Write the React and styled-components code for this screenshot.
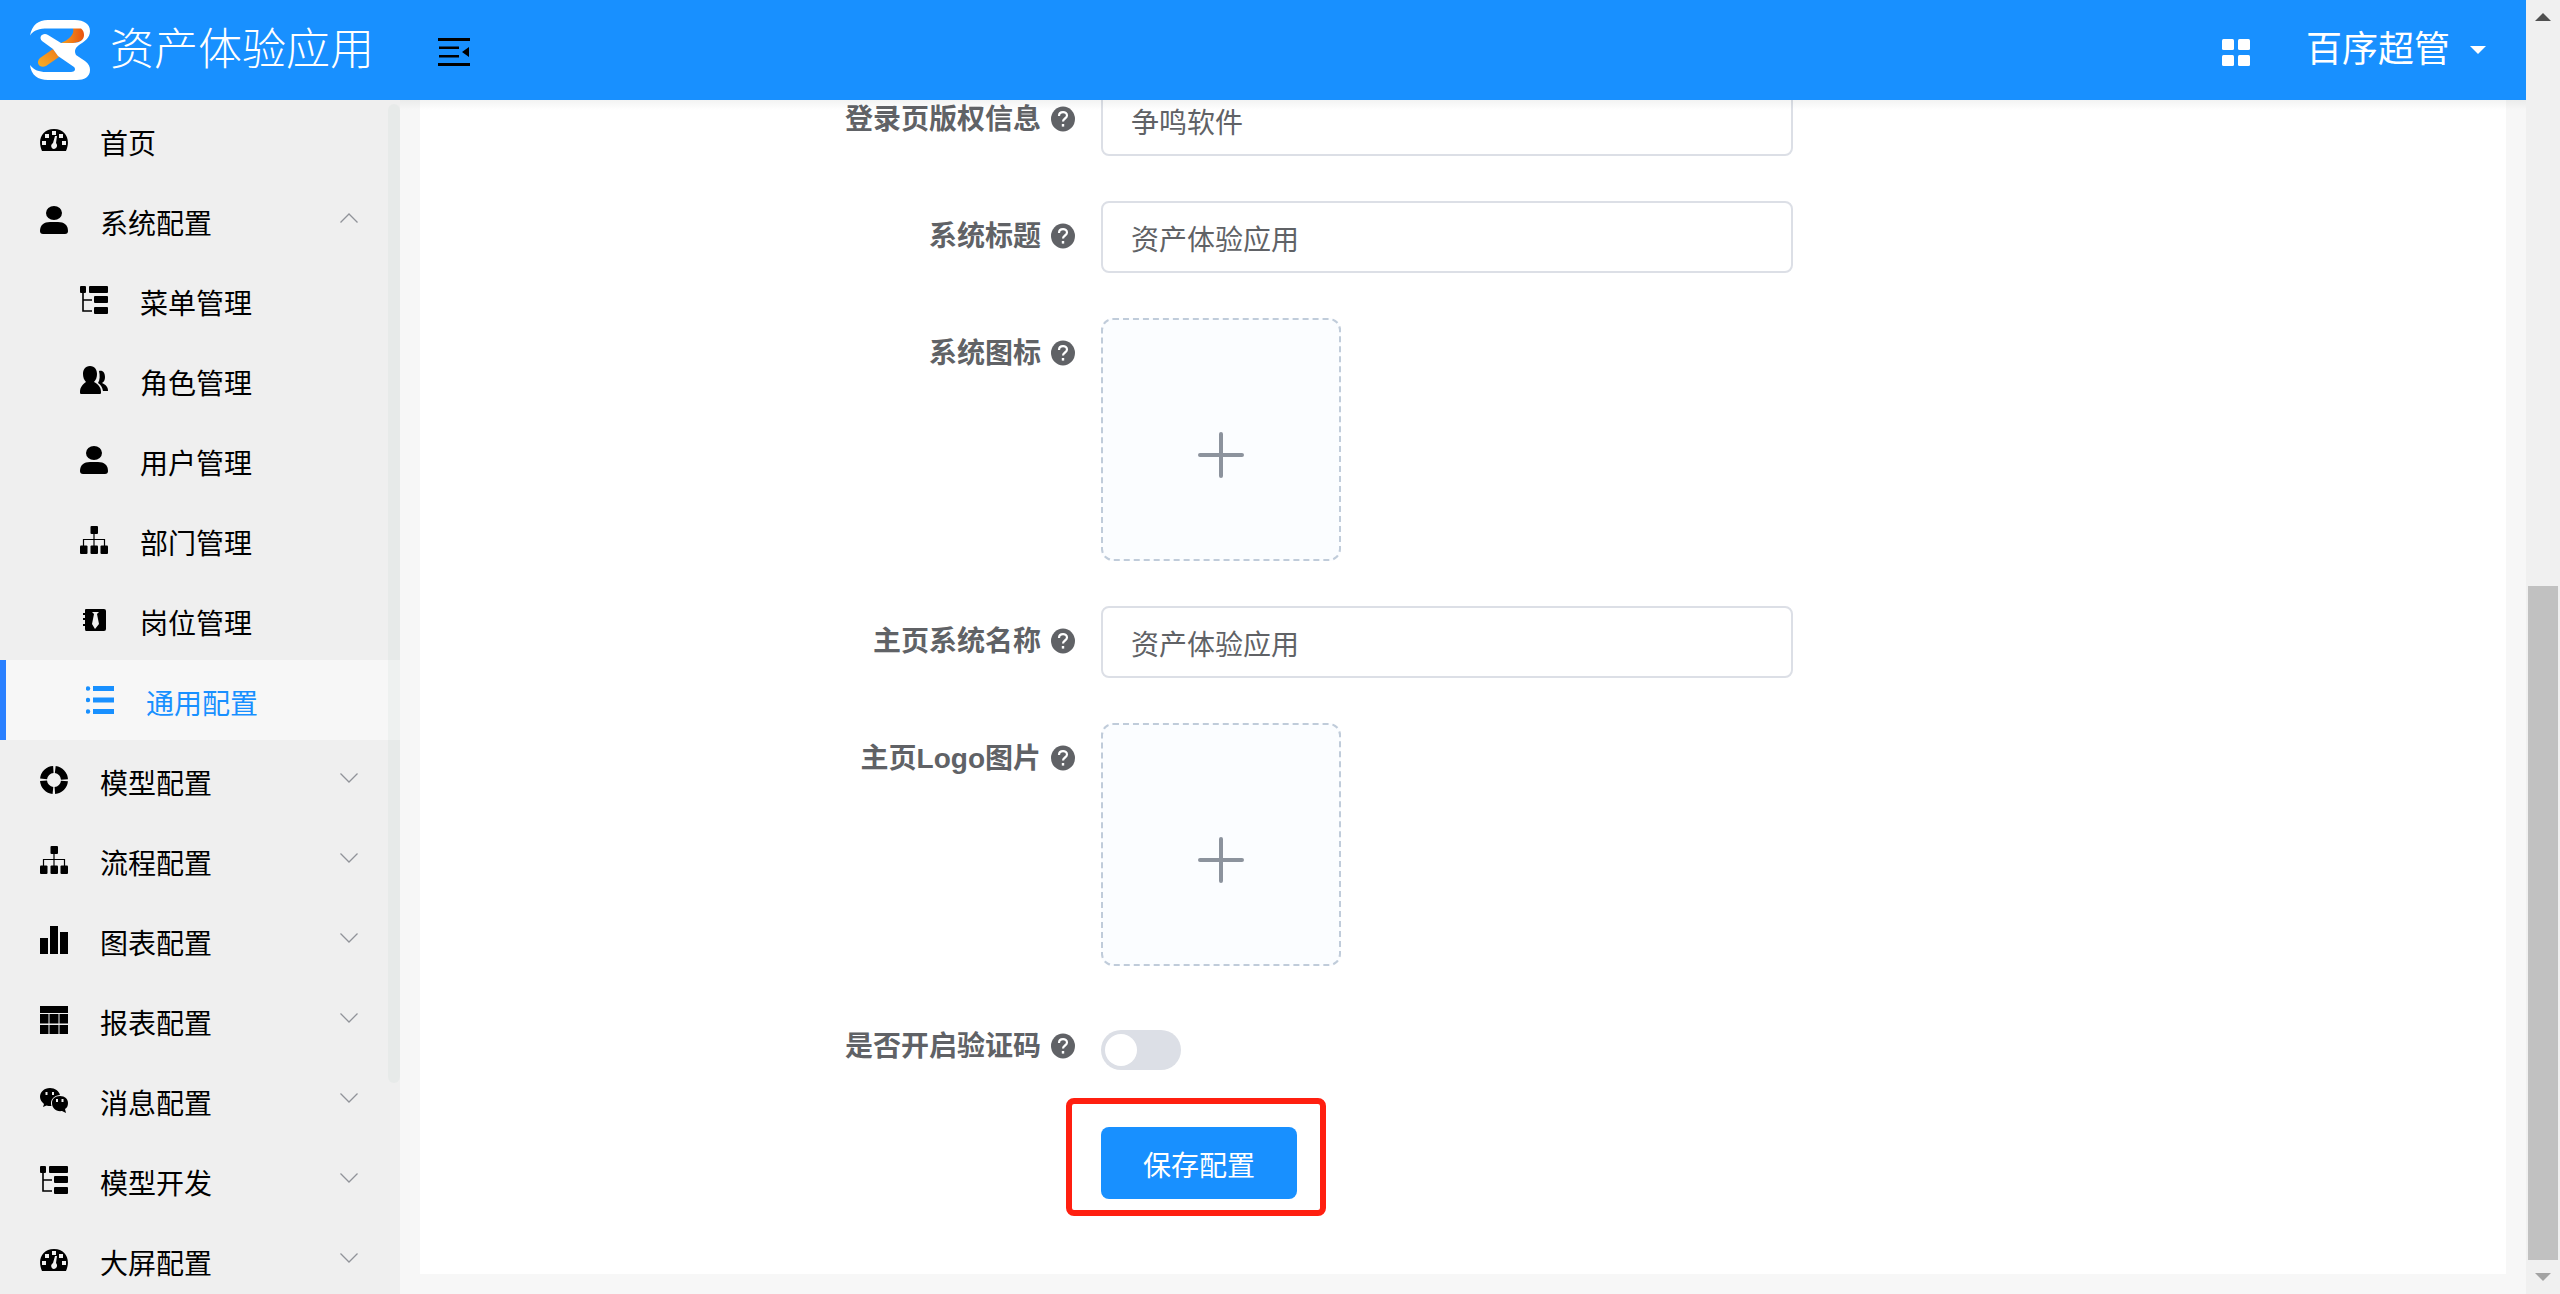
import React, { useState } from "react";
import styled, { createGlobalStyle } from "styled-components";

const GlobalStyle = createGlobalStyle`
  * { box-sizing: border-box; }
  body { margin: 0; overflow: hidden; background: #f7f7f7; }
  body, button, input { font-family: "Liberation Sans", "Noto Sans CJK SC", sans-serif; }
`;

const Page = styled.div`
  display: flex;
  height: 100vh;
`;

const AppColumn = styled.div`
  flex: 1;
  min-width: 0;
  display: flex;
  flex-direction: column;
`;

const Header = styled.header`
  position: relative;
  z-index: 2;
  flex: none;
  display: flex;
  align-items: center;
  height: 100px;
  padding: 0 40px 0 30px;
  background: #1890ff;
  color: #fff;
`;

const Brand = styled.a`
  display: flex;
  align-items: center;
  gap: 20px;
  color: inherit;
  text-decoration: none;
  font-size: 44px;
  font-weight: 300;
  line-height: 60px;
`;

const IconButton = styled.button`
  display: flex;
  border: 0;
  padding: 4px 0 0;
  background: none;
  color: ${(p) => p.$color};
  margin-left: ${(p) => p.$gap};
  cursor: pointer;
`;

const UserButton = styled.button`
  display: flex;
  align-items: center;
  gap: 20px;
  margin-left: 56px;
  border: 0;
  padding: 0;
  background: none;
  color: #fff;
  font-size: 36px;
  line-height: 60px;
  cursor: pointer;
`;

const Body = styled.div`
  flex: 1;
  min-height: 0;
  display: flex;
`;

const Sidebar = styled.aside`
  position: relative;
  z-index: 3;
  flex: none;
  width: 400px;
  overflow: hidden;
  background: #efefef;
`;

const SidebarThumb = styled.div`
  position: absolute;
  top: 4px;
  right: 0;
  width: 12px;
  height: 82%;
  border-radius: 6px;
  background: rgba(170, 200, 185, 0.1);
`;

const Menu = styled.ul`
  margin: 0;
  padding: 0;
  list-style: none;
`;

const MenuLink = styled.a`
  display: flex;
  align-items: center;
  gap: 32px;
  height: 80px;
  padding: 0 42px 0 ${(p) => (p.$sub ? "80px" : "40px")};
  border-left: ${(p) => (p.$active ? "6px solid #2a80ff" : "0")};
  background: ${(p) => (p.$active ? "#f7f7f7" : "transparent")};
  color: ${(p) => (p.$active ? "#1890ff" : "#000")};
  font-size: 28px;
  line-height: 40px;
  text-decoration: none;

  > svg { flex: none; }
`;

const MenuText = styled.span`
  flex: 1;
  padding-top: 10px;
`;

const ChevronSvg = styled.svg`
  margin-bottom: 4px;
  transform: ${(p) => (p.$open ? "rotate(180deg)" : "none")};
`;

const Main = styled.main`
  flex: 1;
  min-width: 0;
  display: flex;
  flex-direction: column;
  justify-content: flex-end;
  overflow: hidden;
  padding: 0 20px 20px;
`;

const Card = styled.form`
  flex: none;
  display: flex;
  flex-direction: column;
  gap: 45px;
  padding: 20px 0 75px;
  background: #fff;
`;

const HeaderShade = styled.div`
  position: absolute;
  top: 100%;
  left: 400px;
  right: 0;
  height: 10px;
  background: linear-gradient(rgba(0, 21, 15, 0.05), rgba(0, 21, 15, 0));
`;

const Row = styled.div`
  display: grid;
  grid-template-columns: minmax(0, 681fr) minmax(0, 692fr) minmax(0, 713fr);
  align-items: start;
`;

const LabelCell = styled.div`
  display: flex;
  align-items: center;
  justify-content: flex-end;
  gap: 10px;
  height: 71px;
  padding-right: 26px;
  color: #606266;

  > svg { margin-bottom: 2px; }
`;

const Label = styled.label`
  font-size: 28px;
  font-weight: 700;
  line-height: 40px;
`;

const Control = styled.div`
  grid-column: 2;
  display: flex;
`;

const TextInput = styled.input`
  width: 100%;
  height: 72px;
  padding: 2px 28px 0;
  border: 2px solid #dcdfe6;
  border-radius: 8px;
  outline: none;
  background: #fff;
  color: #606266;
  font-size: 28px;
`;

const UploadButton = styled.button`
  display: flex;
  align-items: center;
  justify-content: center;
  width: 240px;
  height: 243px;
  padding: 30px 0 0;
  border: 2px dashed #c0ccda;
  border-radius: 12px;
  background: #fbfdff;
  color: #8c939d;
  cursor: pointer;
`;

const Switch = styled.input`
  appearance: none;
  display: flex;
  width: 80px;
  height: 40px;
  margin: 19px 0 12px;
  padding: 4px;
  border-radius: 20px;
  background: #dcdfe6;
  cursor: pointer;

  &::before {
    content: "";
    width: 32px;
    height: 32px;
    border-radius: 50%;
    background: #fff;
  }
  &:checked {
    justify-content: flex-end;
    background: #1890ff;
  }
`;

const SaveWrap = styled.div`
  position: relative;
`;

const SaveButton = styled.button`
  display: block;
  height: 72px;
  padding: 2px 42px 0;
  border: 0;
  border-radius: 8px;
  background: #1890ff;
  color: #fff;
  font-size: 28px;
  cursor: pointer;
`;

const Highlight = styled.div`
  position: absolute;
  inset: -29px -29px -17px -35px;
  border: 6px solid #ff1f10;
  border-radius: 8px;
  pointer-events: none;
`;

const ScrollRail = styled.div`
  flex: none;
  display: flex;
  flex-direction: column;
  width: 34px;
  padding: 0 2px;
  background: #f0f0f0;
`;

const RailArrow = styled.div`
  flex: none;
  display: flex;
  align-items: center;
  justify-content: center;
  height: 34px;
`;

const RailTrack = styled.div`
  flex: 1;
  display: flex;
  flex-direction: column;
  justify-content: flex-end;
`;

const RailThumb = styled.div`
  height: 55%;
  background: #c1c1c1;
`;

const Logo = () => (
  <svg width="60" height="60" viewBox="0 0 60 60" aria-hidden="true">
    <defs>
      <linearGradient id="warmTop" x1="0" y1="0" x2="1" y2="0">
        <stop offset="0" stopColor="#f6a11f" />
        <stop offset="1" stopColor="#e9500f" />
      </linearGradient>
      <linearGradient id="warmLow" x1="0" y1="1" x2="1" y2="0">
        <stop offset="0" stopColor="#f8b026" />
        <stop offset="1" stopColor="#ee7a1a" />
      </linearGradient>
    </defs>
    <path d="M43 8h9c4 5 4 10-1 13-5 2-10 3-20 2 7-3 14-8 12-15z" fill="url(#warmTop)" />
    <path d="M23 29l-13 9c-5 5 0 11 6 8l13-9z" fill="url(#warmLow)" />
    <path d="M0 15.500C2 5 8 0 18 0h27c9 0 15 4 15 11 0 7-6 11-11 14-4 3-5 6-3 10l9 6c4 3 5 6 5 9 0 7-6 10-13 10H18C8 60 1 55 0 45c4 5 9 7 16 7h25c4 0 5-3 3-5L28 36l-5-7-11-8c-4-4 1-9 6-6l13 8h12c8 0 11-4 11-8 0-3-1-5-3-6.500H18C9 8.500 4 10 0 15.500z" fill="#fff" />
  </svg>
);

const svgProps = { width: 28, height: 28, viewBox: "0 0 28 28", fill: "currentColor", "aria-hidden": true };

const Dashboard = () => (
  <svg {...svgProps}>
    <path fillRule="evenodd" d="M2 25C-3 14 2 3 14 3s17 11 12 22zM12 5v4h4V5zM5 8v4h4V8zM19 8v4h4V8zM2 15v4h4v-4zM22 15v4h4v-4zM15 10l-2 7c-3 2-2 6 1 6s4-4 2-6l1-7z" />
  </svg>
);
const Person = () => (
  <svg {...svgProps}>
    <ellipse cx="14" cy="7" rx="8" ry="7" />
    <path d="M0 25c0-6 4-9 10-9h8c6 0 10 3 10 9 0 2-1 3-3 3H3c-2 0-3-1-3-3z" />
  </svg>
);
const Tree = () => (
  <svg {...svgProps}>
    <rect width="6" height="7" rx="1" />
    <rect x="9" width="19" height="7" rx="1" />
    <rect x="14" y="10" width="14" height="7" rx="1" />
    <rect x="14" y="21" width="14" height="7" rx="1" />
    <path d="M3 7v18h9M3 14h9" fill="none" stroke="currentColor" strokeWidth="1.600" />
  </svg>
);
const Peoples = () => (
  <svg {...svgProps}>
    <path d="M10 0c5 0 7 4 7 8 0 3-1 6-3 8 4 2 7 5 7 10 0 1 0 2-1 2H1c-1 0-1-1-1-2 0-5 3-8 6-10-2-2-3-5-3-8 0-4 2-8 7-8z" />
    <path d="M19 5c4-1 6 2 6 6 0 3-1 5-3 6 4 2 6 4 6 8h-5c-1-4-2-6-5-8 2-3 2-8 1-12z" />
  </svg>
);
const Org = () => (
  <svg {...svgProps}>
    <rect x="10.500" width="7.500" height="8" rx="1" />
    <rect y="19.500" width="7.500" height="8.500" rx="1" />
    <rect x="10.500" y="19.500" width="7.500" height="8.500" rx="1" />
    <rect x="20.500" y="19.500" width="7.500" height="8.500" rx="1" />
    <path d="M3.500 20v-6.500h21V20M14 8v12" fill="none" stroke="currentColor" strokeWidth="1.200" />
  </svg>
);
const Post = () => (
  <svg {...svgProps}>
    <path fillRule="evenodd" d="M6 3h18q2 0 2 2v18q0 2-2 2H6q-1 0-1-2v-3H3v-2h2v-4H3v-2h2V9H3V7h2V4q0-1 1-1zM12 6l2 2-2 10 3 5 4-5-2-10 2-2z" />
  </svg>
);
const List = () => (
  <svg {...svgProps}>
    <circle cx="2" cy="2.500" r="2.200" />
    <circle cx="2" cy="14" r="2.200" />
    <circle cx="2" cy="25.500" r="2.200" />
    <path d="M7 0h21v5H7zM7 11.500h21v5H7zM7 23h21v5H7z" />
  </svg>
);
const Component = () => (
  <svg {...svgProps}>
    <circle cx="14" cy="14" r="10.500" fill="none" stroke="currentColor" strokeWidth="7" strokeDasharray="14.500 1.993" strokeDashoffset="-1" />
  </svg>
);
const Chart = () => (
  <svg {...svgProps}>
    <path d="M0 12h8v16H0zM10 0h8v28h-8zM20 6h8v22h-8z" />
  </svg>
);
const Table = () => (
  <svg {...svgProps}>
    <path d="M0 0h28v7H0zM0 8h8.500v9.500H0zM9.500 8h9v9.500h-9zM19.500 8H28v9.500h-8.500zM0 19h8.500v9H0zM9.500 19h9v9h-9zM19.500 19H28v9h-8.500z" />
  </svg>
);
const Wechat = () => (
  <svg {...svgProps}>
    <path fillRule="evenodd" d="M10 2c5 0 9 3 10 7-5 0-9 4-9 8 0 1 0 2 .5 3-2 0-4 0-5-.600L3 21l1-3c-2-2-4-4-4-7 0-5 4-9 10-9zM5.500 6v3h2V6zM12 6v3h2V6z" />
    <path fillRule="evenodd" d="M20 10c5 0 8 3 8 7 0 3-1 5-3 6l1 4-4-2c-6 1-10-3-10-8 0-4 3-7 8-7zM16 13v3h2v-3zM21.500 13v3h2v-3z" />
  </svg>
);
const Fold = () => (
  <svg width="32" height="28" viewBox="0 0 32 28" fill="currentColor" aria-hidden="true">
    <path d="M0 0h32v3H0zM1 8.500h20v2.500H1zM1 17h20v2.500H1zM0 25h32v3H0zM31 9v10l-7-5z" />
  </svg>
);
const Apps = () => (
  <svg width="28" height="27" viewBox="0 0 28 27" fill="currentColor" aria-hidden="true">
    <rect width="12" height="11" rx="1.500" />
    <rect x="16" width="12" height="11" rx="1.500" />
    <rect y="16" width="12" height="11" rx="1.500" />
    <rect x="16" y="16" width="12" height="11" rx="1.500" />
  </svg>
);
const Caret = ({ color = "#fff", up }) => (
  <svg width="16" height="8" viewBox="0 0 16 8" fill={color} aria-hidden="true">
    <path d={up ? "M0 8h16L8 0z" : "M0 0h16L8 8z"} />
  </svg>
);
const Chevron = ({ open }) => (
  <ChevronSvg $open={open} width="18" height="10" viewBox="0 0 18 10" aria-hidden="true">
    <path d="M.5.500L9 9l8.500-8.500" fill="none" stroke="#909399" strokeWidth="1.300" />
  </ChevronSvg>
);
const Help = () => (
  <svg width="24" height="26" viewBox="0 0 24 26" aria-hidden="true">
    <ellipse cx="12" cy="13" rx="12" ry="12.500" fill="#606266" />
    <path d="M8 10c0-5 8-5 8-.5 0 3-4 3-4 6" fill="none" stroke="#fff" strokeWidth="2.200" />
    <rect x="10.800" y="18" width="2.400" height="2.600" fill="#fff" />
  </svg>
);
const Plus = () => (
  <svg width="46" height="46" viewBox="0 0 46 46" aria-hidden="true">
    <path d="M2 23h42M23 2v42" stroke="currentColor" strokeWidth="4" strokeLinecap="round" />
  </svg>
);

const MENU = [
  { text: "首页", icon: Dashboard },
  { text: "系统配置", icon: Person, group: true, open: true },
  { text: "菜单管理", icon: Tree, sub: true },
  { text: "角色管理", icon: Peoples, sub: true },
  { text: "用户管理", icon: Person, sub: true },
  { text: "部门管理", icon: Org, sub: true },
  { text: "岗位管理", icon: Post, sub: true },
  { text: "通用配置", icon: List, sub: true, active: true },
  { text: "模型配置", icon: Component, group: true },
  { text: "流程配置", icon: Org, group: true },
  { text: "图表配置", icon: Chart, group: true },
  { text: "报表配置", icon: Table, group: true },
  { text: "消息配置", icon: Wechat, group: true },
  { text: "模型开发", icon: Tree, group: true },
  { text: "大屏配置", icon: Dashboard, group: true },
];

const Field = ({ id, label, children }) => (
  <Row>
    <LabelCell>
      <Label htmlFor={id}>{label}</Label>
      <Help />
    </LabelCell>
    <Control>{children}</Control>
  </Row>
);

export default function App() {
  const [captcha, setCaptcha] = useState(false);
  return (
    <Page>
      <GlobalStyle />
      <AppColumn>
        <Header>
          <Brand href="#">
            <Logo />
            资产体验应用
          </Brand>
          <IconButton type="button" aria-label="fold" $color="#000" $gap="64px">
            <Fold />
          </IconButton>
          <IconButton type="button" aria-label="apps" $color="#fff" $gap="auto">
            <Apps />
          </IconButton>
          <UserButton type="button">
            百序超管
            <Caret />
          </UserButton>
          <HeaderShade />
        </Header>
        <Body>
          <Sidebar>
            <Menu>
              {MENU.map(({ text, icon: Icon, sub, active, group, open }) => (
                <li key={text}>
                  <MenuLink href="#" $sub={sub} $active={active}>
                    <Icon />
                    <MenuText>{text}</MenuText>
                    {group && <Chevron open={open} />}
                  </MenuLink>
                </li>
              ))}
            </Menu>
            <SidebarThumb />
          </Sidebar>
          <Main>
            <Card onSubmit={(e) => e.preventDefault()}>
              <Field id="copyright" label="登录页版权信息">
                <TextInput id="copyright" defaultValue="争鸣软件" />
              </Field>
              <Field id="title" label="系统标题">
                <TextInput id="title" defaultValue="资产体验应用" />
              </Field>
              <Field id="icon" label="系统图标">
                <UploadButton id="icon" type="button"><Plus /></UploadButton>
              </Field>
              <Field id="name" label="主页系统名称">
                <TextInput id="name" defaultValue="资产体验应用" />
              </Field>
              <Field id="logo" label="主页Logo图片">
                <UploadButton id="logo" type="button"><Plus /></UploadButton>
              </Field>
              <Field id="captcha" label="是否开启验证码">
                <Switch
                  id="captcha"
                  type="checkbox"
                  role="switch"
                  checked={captcha}
                  onChange={(e) => setCaptcha(e.target.checked)}
                />
              </Field>
              <Row>
                <Control>
                  <SaveWrap>
                    <SaveButton type="submit">保存配置</SaveButton>
                    <Highlight />
                  </SaveWrap>
                </Control>
              </Row>
            </Card>
          </Main>
        </Body>
      </AppColumn>
      <ScrollRail aria-hidden="true">
        <RailArrow><Caret up color="#505050" /></RailArrow>
        <RailTrack><RailThumb /></RailTrack>
        <RailArrow><Caret color="#a3a3a3" /></RailArrow>
      </ScrollRail>
    </Page>
  );
}
